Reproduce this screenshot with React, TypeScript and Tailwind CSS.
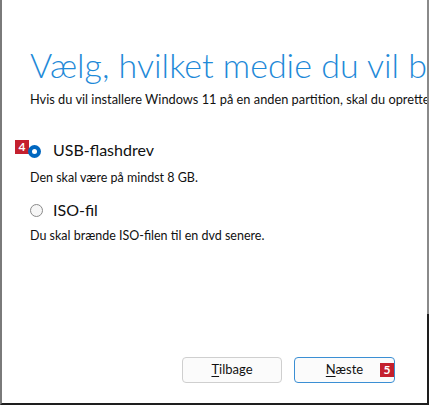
import React from 'react';

const Badge: React.FC<{ n: string }> = ({ n }) => (
    <span className="flex items-center justify-center w-[14px] h-[14px] bg-[#c4202e] text-white text-[12px] font-bold leading-none">
        {n}
    </span>
);

const Radio: React.FC<{ checked?: boolean }> = ({ checked }) =>
    checked ? (
        <span className="flex items-center justify-center w-[13px] h-[13px] rounded-full bg-[#0067c0]">
            <span className="w-[5px] h-[5px] rounded-full bg-white" />
        </span>
    ) : (
        <span className="w-[13px] h-[13px] rounded-full border border-[#8a8a8a] bg-[#f6f6f6]" />
    );

export default function App() {
    return (
        <div className="flex w-[429px] h-[405px] bg-white overflow-hidden" style={{ fontFamily: 'Lato, "Noto Sans", sans-serif' }}>
            <div className="flex flex-col flex-1 min-w-0 border-l-2 border-[#7a7a7a] border-b-2 border-b-[#1e1e1e]">
                {/* Heading */}
                <div className="pl-[28px] pt-[43px] whitespace-nowrap overflow-hidden">
                    <h1 className="text-[34px] font-light leading-[43px] text-[#1f8ad8]">
                        Vælg, hvilket medie du vil bruge
                    </h1>
                    <p className="mt-[5px] text-[12.8px] leading-[16px] text-[#111]">
                        Hvis du vil installere Windows 11 på en anden partition, skal du oprette og køre medie
                    </p>
                </div>

                {/* Options */}
                <div className="flex flex-col pl-[13px] mt-[33px]">
                    <div className="flex items-center">
                        <div className="flex items-start w-[38px] h-[20px]">
                            <Badge n="4" />
                            <span className="-ml-[1px] mt-[5px]"><Radio checked /></span>
                        </div>
                        <span className="text-[16px] leading-[20px] text-[#111]">USB-flashdrev</span>
                    </div>
                    <p className="pl-[15px] mt-[10px] text-[12.5px] leading-[16px] text-[#111]">Den skal være på mindst 8 GB.</p>

                    <div className="flex items-center mt-[14px] pl-[15px]">
                        <span className="w-[23px] flex"><Radio /></span>
                        <span className="text-[16px] leading-[20px] text-[#111]">ISO-fil</span>
                    </div>
                    <p className="pl-[15px] mt-[8px] text-[12.5px] leading-[16px] text-[#111]">Du skal brænde ISO-filen til en dvd senere.</p>
                </div>

                {/* Buttons */}
                <div className="mt-auto mb-[20px] flex items-center justify-end pr-[33px] gap-[12px]">
                    <button className="w-[100px] h-[26px] rounded-[4px] border border-[#cfcfcf] bg-[#fbfbfb] text-[13px] text-[#111]">
                        <span className="underline underline-offset-2">T</span>ilbage
                    </button>
                    <div className="flex items-center">
                        <button className="w-[101px] h-[26px] rounded-[4px] border border-[#3b8fd4] bg-[#fbfbfb] text-[13px] text-[#111]">
                            <span className="underline underline-offset-2">N</span>æste
                        </button>
                        <span className="-ml-[15px]"><Badge n="5" /></span>
                    </div>
                </div>
            </div>

            {/* Right window edge */}
            <div className="flex flex-col w-[2px]">
                <div className="h-[314px] bg-[#8a8a8a]" />
                <div className="flex-1 bg-[#1e1e1e]" />
            </div>
        </div>
    );
}
